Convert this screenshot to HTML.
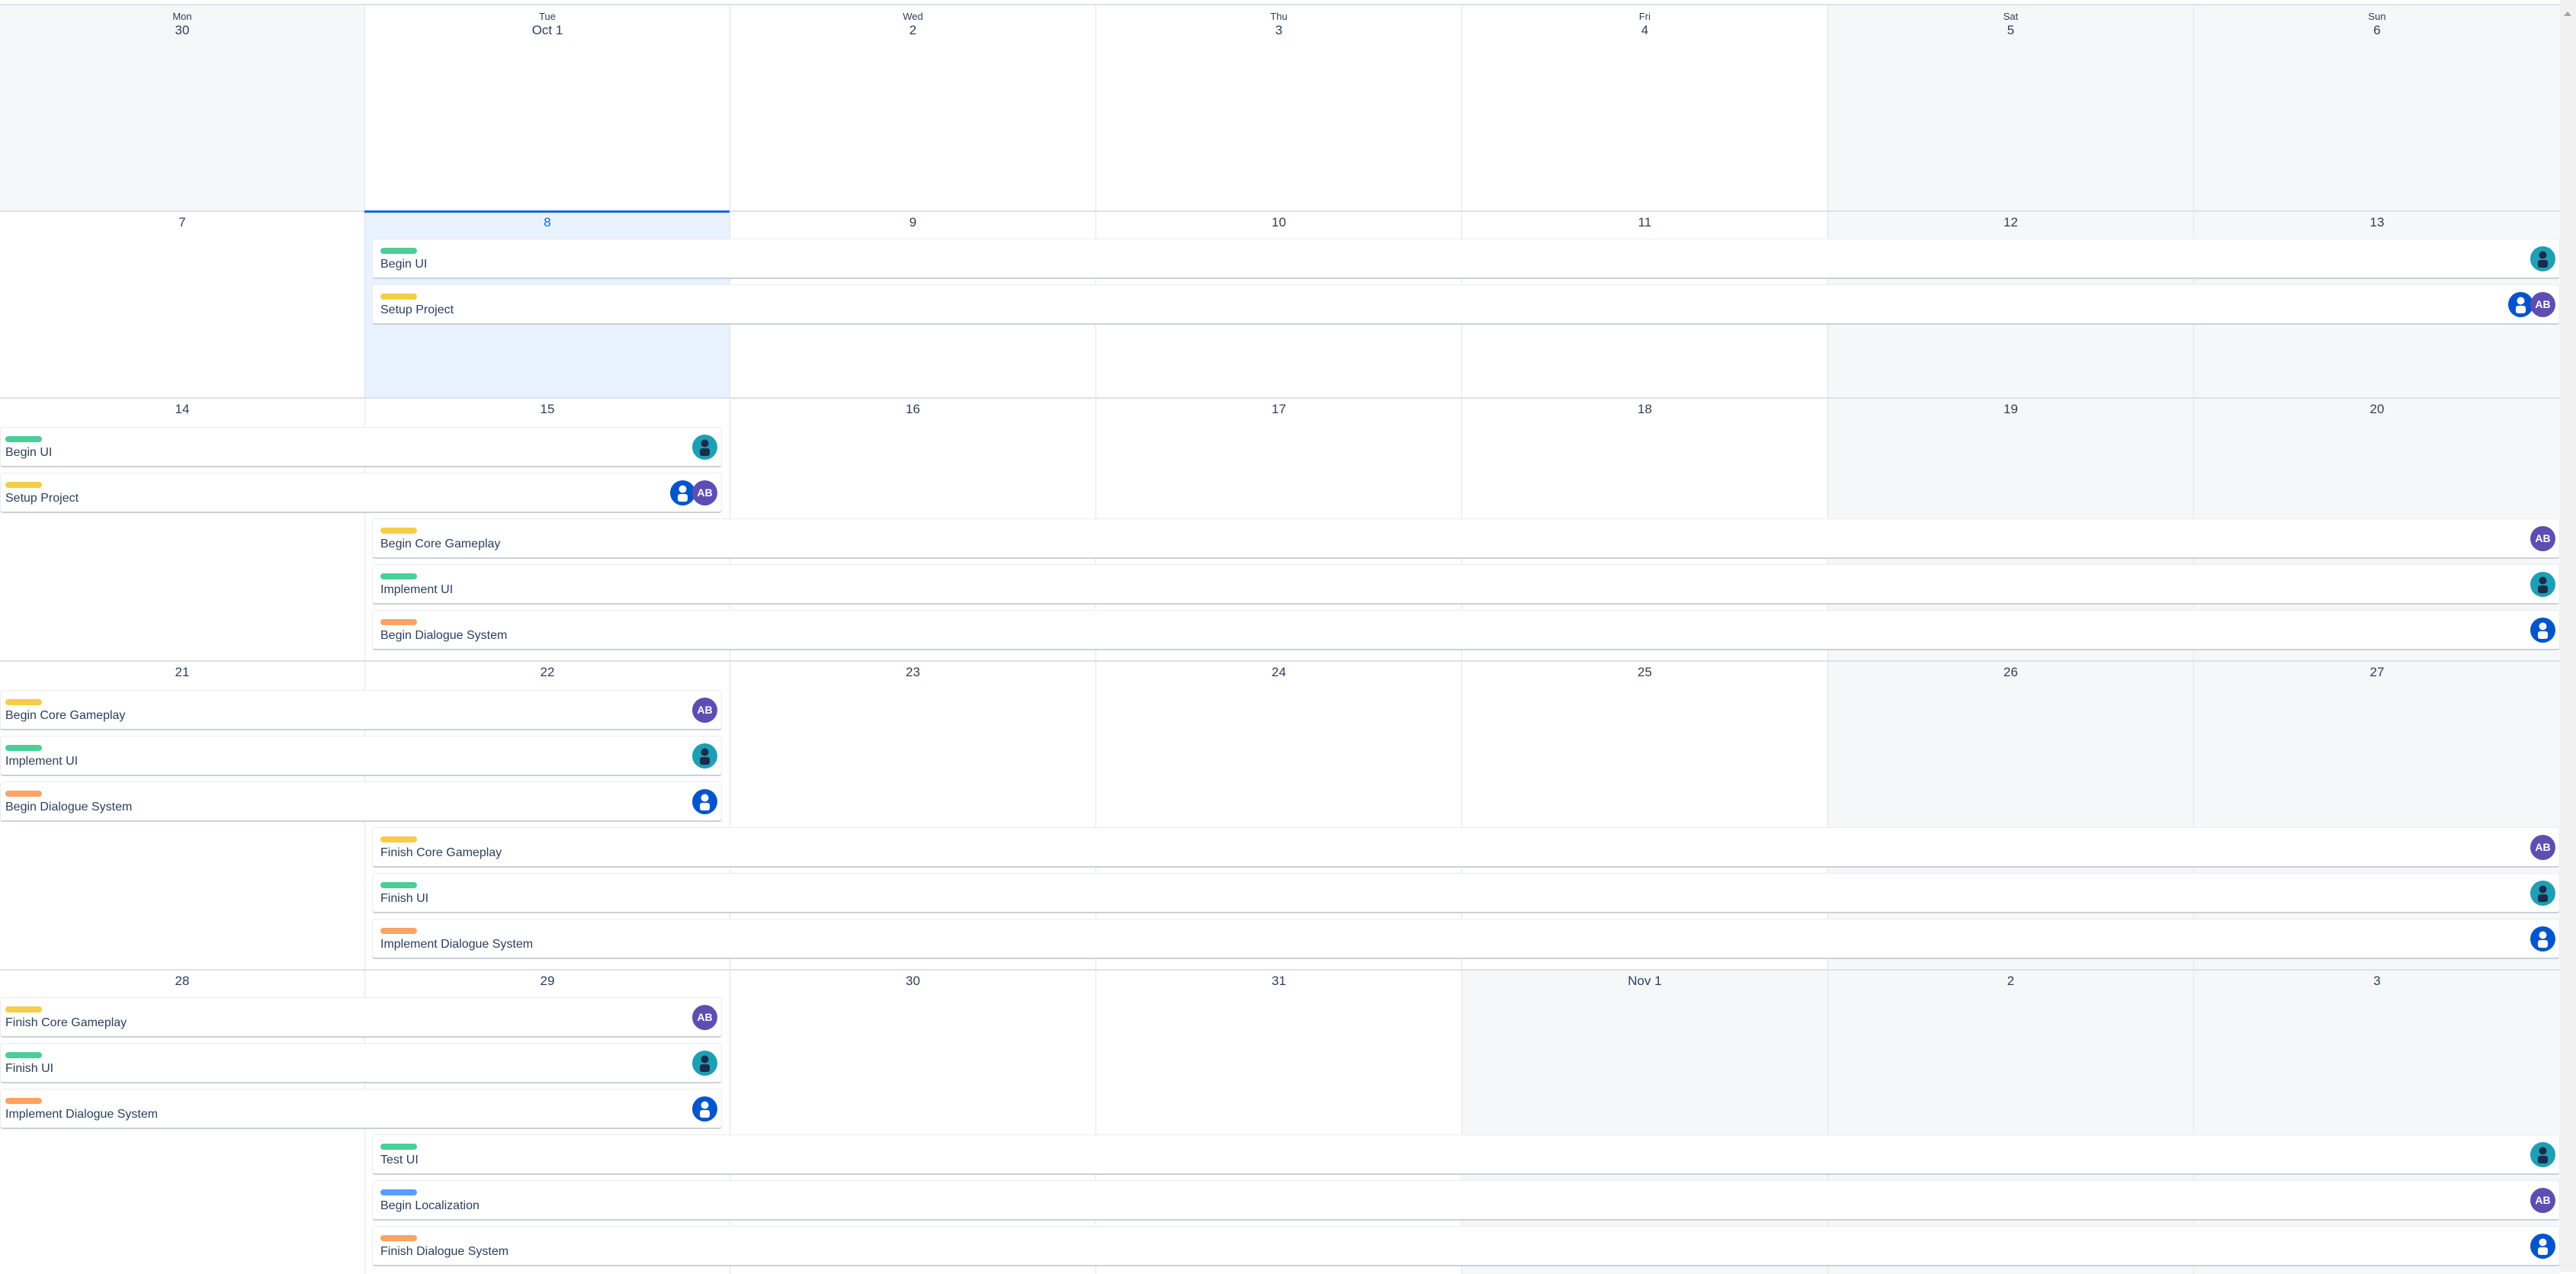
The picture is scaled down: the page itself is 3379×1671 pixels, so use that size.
<!DOCTYPE html>
<html><head><meta charset="utf-8">
<style>
*{margin:0;padding:0;box-sizing:border-box}
body{width:3379px;height:1668px;overflow:hidden;background:#fff;font-family:"Liberation Sans",sans-serif;position:relative}
.sb{position:absolute;left:3358px;top:0;width:21px;height:1668px;background:#f1f1f1}
.sb:after{content:"";position:absolute;left:5px;top:15px;border-left:5px solid transparent;border-right:5px solid transparent;border-bottom:6px solid #a3a3a3}
.wk{position:absolute;left:0;width:3358px;border-top:2px solid #dfe1e6}
.c{position:absolute;top:0;bottom:0;border-left:1px solid #e2e4e9}
.c0{left:0;width:478px;border-left:none}.c1{left:478px;width:479px}.c2{left:957px;width:480px}.c3{left:1437px;width:480px}.c4{left:1917px;width:480px}.c5{left:2397px;width:480px}.c6{left:2877px;width:481px}
.g{background:#f6f7f9}
.t{background:#e9f2ff}
.t:before{content:"";position:absolute;left:-1px;right:0;top:-2px;height:3px;background:#0c66e4}
.n{position:absolute;left:0;right:0;top:4px;text-align:center;font-size:17px;color:#2c3e5d;line-height:20px}
.t .n{color:#0c66e4}
.dw{position:absolute;left:0;right:0;top:7px;text-align:center;font-size:13px;color:#2c3e5d}
.dn{position:absolute;left:0;right:0;top:23px;text-align:center;font-size:17px;color:#2c3e5d}
.cd{position:absolute;height:53px;background:#fff;border:1px solid #ebecf0;border-bottom:2px solid #cdd0d8;border-radius:4px}
.bar{position:absolute;left:10px;top:11px;width:48px;height:8px;border-radius:4px}
.tx{position:absolute;left:10px;top:23px;font-size:16px;color:#2c3e5d;line-height:20px;white-space:nowrap}
.av{position:absolute;top:9px;width:33px;height:33px}
.gr{background:#4bce97}.ye{background:#f5cd47}.or{background:#fea362}.bl{background:#579dff}
.ab{border-radius:50%;background:#5e4db2;color:#fff;font-weight:bold;font-size:14px;line-height:33px;text-align:center}
</style></head><body>
<div class="sb"></div>
<div style="position:absolute;left:0;top:0;width:3358px;height:5px;background:#fff"></div>

<!-- week 1 -->
<div class="wk" style="top:5px;height:271px">
<div class="c c0 g"><div class="dw">Mon</div><div class="dn">30</div></div>
<div class="c c1"><div class="dw">Tue</div><div class="dn">Oct 1</div></div>
<div class="c c2"><div class="dw">Wed</div><div class="dn">2</div></div>
<div class="c c3"><div class="dw">Thu</div><div class="dn">3</div></div>
<div class="c c4"><div class="dw">Fri</div><div class="dn">4</div></div>
<div class="c c5 g"><div class="dw">Sat</div><div class="dn">5</div></div>
<div class="c c6 g"><div class="dw">Sun</div><div class="dn">6</div></div>
</div>

<!-- week 2 -->
<div class="wk" style="top:276px;height:245px">
<div class="c c0"><div class="n">7</div></div>
<div class="c c1 t"><div class="n">8</div></div>
<div class="c c2"><div class="n">9</div></div>
<div class="c c3"><div class="n">10</div></div>
<div class="c c4"><div class="n">11</div></div>
<div class="c c5 g"><div class="n">12</div></div>
<div class="c c6 g"><div class="n">13</div></div>
</div>

<!-- week 3 -->
<div class="wk" style="top:521px;height:345px">
<div class="c c0"><div class="n">14</div></div>
<div class="c c1"><div class="n">15</div></div>
<div class="c c2"><div class="n">16</div></div>
<div class="c c3"><div class="n">17</div></div>
<div class="c c4"><div class="n">18</div></div>
<div class="c c5 g"><div class="n">19</div></div>
<div class="c c6 g"><div class="n">20</div></div>
</div>

<!-- week 4 -->
<div class="wk" style="top:866px;height:405px">
<div class="c c0"><div class="n">21</div></div>
<div class="c c1"><div class="n">22</div></div>
<div class="c c2"><div class="n">23</div></div>
<div class="c c3"><div class="n">24</div></div>
<div class="c c4"><div class="n">25</div></div>
<div class="c c5 g"><div class="n">26</div></div>
<div class="c c6 g"><div class="n">27</div></div>
</div>

<!-- week 5 -->
<div class="wk" style="top:1271px;height:400px">
<div class="c c0"><div class="n">28</div></div>
<div class="c c1"><div class="n">29</div></div>
<div class="c c2"><div class="n">30</div></div>
<div class="c c3"><div class="n">31</div></div>
<div class="c c4 g"><div class="n">Nov 1</div></div>
<div class="c c5 g"><div class="n">2</div></div>
<div class="c c6 g"><div class="n">3</div></div>
</div>

<!-- week 2 cards -->
<div class="cd" style="left:488px;width:2870px;top:313px"><div class="bar gr"></div><div class="tx">Begin UI</div>
<svg class="av" style="right:5px" viewBox="0 0 33 33"><circle cx="16.5" cy="16.5" r="16.5" fill="#1d9fb5"/><circle cx="16.5" cy="11.5" r="5" fill="#1c2b4a"/><rect x="10" y="18" width="13" height="10" rx="3" fill="#1c2b4a"/></svg></div>
<div class="cd" style="left:488px;width:2870px;top:373px"><div class="bar ye"></div><div class="tx">Setup Project</div>
<svg class="av" style="right:34px" viewBox="0 0 33 33"><circle cx="16.5" cy="16.5" r="16.5" fill="#0055cc"/><circle cx="16.5" cy="11.5" r="5" fill="#fff"/><rect x="10" y="18" width="13" height="10" rx="3" fill="#fff"/></svg>
<div class="av ab" style="right:5px">AB</div></div>

<!-- week 3 cards -->
<div class="cd" style="left:0;width:947px;top:560px"><div class="bar gr" style="left:6px"></div><div class="tx" style="left:6px">Begin UI</div>
<svg class="av" style="right:5px" viewBox="0 0 33 33"><circle cx="16.5" cy="16.5" r="16.5" fill="#1d9fb5"/><circle cx="16.5" cy="11.5" r="5" fill="#1c2b4a"/><rect x="10" y="18" width="13" height="10" rx="3" fill="#1c2b4a"/></svg></div>
<div class="cd" style="left:0;width:947px;top:620px"><div class="bar ye" style="left:6px"></div><div class="tx" style="left:6px">Setup Project</div>
<svg class="av" style="right:34px" viewBox="0 0 33 33"><circle cx="16.5" cy="16.5" r="16.5" fill="#0055cc"/><circle cx="16.5" cy="11.5" r="5" fill="#fff"/><rect x="10" y="18" width="13" height="10" rx="3" fill="#fff"/></svg>
<div class="av ab" style="right:5px">AB</div></div>
<div class="cd" style="left:488px;width:2870px;top:680px"><div class="bar ye"></div><div class="tx">Begin Core Gameplay</div><div class="av ab" style="right:5px">AB</div></div>
<div class="cd" style="left:488px;width:2870px;top:740px"><div class="bar gr"></div><div class="tx">Implement UI</div>
<svg class="av" style="right:5px" viewBox="0 0 33 33"><circle cx="16.5" cy="16.5" r="16.5" fill="#1d9fb5"/><circle cx="16.5" cy="11.5" r="5" fill="#1c2b4a"/><rect x="10" y="18" width="13" height="10" rx="3" fill="#1c2b4a"/></svg></div>
<div class="cd" style="left:488px;width:2870px;top:800px"><div class="bar or"></div><div class="tx">Begin Dialogue System</div>
<svg class="av" style="right:5px" viewBox="0 0 33 33"><circle cx="16.5" cy="16.5" r="16.5" fill="#0055cc"/><circle cx="16.5" cy="11.5" r="5" fill="#fff"/><rect x="10" y="18" width="13" height="10" rx="3" fill="#fff"/></svg></div>

<!-- week 4 cards -->
<div class="cd" style="left:0;width:947px;top:905px"><div class="bar ye" style="left:6px"></div><div class="tx" style="left:6px">Begin Core Gameplay</div><div class="av ab" style="right:5px">AB</div></div>
<div class="cd" style="left:0;width:947px;top:965px"><div class="bar gr" style="left:6px"></div><div class="tx" style="left:6px">Implement UI</div>
<svg class="av" style="right:5px" viewBox="0 0 33 33"><circle cx="16.5" cy="16.5" r="16.5" fill="#1d9fb5"/><circle cx="16.5" cy="11.5" r="5" fill="#1c2b4a"/><rect x="10" y="18" width="13" height="10" rx="3" fill="#1c2b4a"/></svg></div>
<div class="cd" style="left:0;width:947px;top:1025px"><div class="bar or" style="left:6px"></div><div class="tx" style="left:6px">Begin Dialogue System</div>
<svg class="av" style="right:5px" viewBox="0 0 33 33"><circle cx="16.5" cy="16.5" r="16.5" fill="#0055cc"/><circle cx="16.5" cy="11.5" r="5" fill="#fff"/><rect x="10" y="18" width="13" height="10" rx="3" fill="#fff"/></svg></div>
<div class="cd" style="left:488px;width:2870px;top:1085px"><div class="bar ye"></div><div class="tx">Finish Core Gameplay</div><div class="av ab" style="right:5px">AB</div></div>
<div class="cd" style="left:488px;width:2870px;top:1145px"><div class="bar gr"></div><div class="tx">Finish UI</div>
<svg class="av" style="right:5px" viewBox="0 0 33 33"><circle cx="16.5" cy="16.5" r="16.5" fill="#1d9fb5"/><circle cx="16.5" cy="11.5" r="5" fill="#1c2b4a"/><rect x="10" y="18" width="13" height="10" rx="3" fill="#1c2b4a"/></svg></div>
<div class="cd" style="left:488px;width:2870px;top:1205px"><div class="bar or"></div><div class="tx">Implement Dialogue System</div>
<svg class="av" style="right:5px" viewBox="0 0 33 33"><circle cx="16.5" cy="16.5" r="16.5" fill="#0055cc"/><circle cx="16.5" cy="11.5" r="5" fill="#fff"/><rect x="10" y="18" width="13" height="10" rx="3" fill="#fff"/></svg></div>

<!-- week 5 cards -->
<div class="cd" style="left:0;width:947px;top:1308px"><div class="bar ye" style="left:6px"></div><div class="tx" style="left:6px">Finish Core Gameplay</div><div class="av ab" style="right:5px">AB</div></div>
<div class="cd" style="left:0;width:947px;top:1368px"><div class="bar gr" style="left:6px"></div><div class="tx" style="left:6px">Finish UI</div>
<svg class="av" style="right:5px" viewBox="0 0 33 33"><circle cx="16.5" cy="16.5" r="16.5" fill="#1d9fb5"/><circle cx="16.5" cy="11.5" r="5" fill="#1c2b4a"/><rect x="10" y="18" width="13" height="10" rx="3" fill="#1c2b4a"/></svg></div>
<div class="cd" style="left:0;width:947px;top:1428px"><div class="bar or" style="left:6px"></div><div class="tx" style="left:6px">Implement Dialogue System</div>
<svg class="av" style="right:5px" viewBox="0 0 33 33"><circle cx="16.5" cy="16.5" r="16.5" fill="#0055cc"/><circle cx="16.5" cy="11.5" r="5" fill="#fff"/><rect x="10" y="18" width="13" height="10" rx="3" fill="#fff"/></svg></div>
<div class="cd" style="left:488px;width:2870px;top:1488px"><div class="bar gr"></div><div class="tx">Test UI</div>
<svg class="av" style="right:5px" viewBox="0 0 33 33"><circle cx="16.5" cy="16.5" r="16.5" fill="#1d9fb5"/><circle cx="16.5" cy="11.5" r="5" fill="#1c2b4a"/><rect x="10" y="18" width="13" height="10" rx="3" fill="#1c2b4a"/></svg></div>
<div class="cd" style="left:488px;width:2870px;top:1548px"><div class="bar bl"></div><div class="tx">Begin Localization</div><div class="av ab" style="right:5px">AB</div></div>
<div class="cd" style="left:488px;width:2870px;top:1608px"><div class="bar or"></div><div class="tx">Finish Dialogue System</div>
<svg class="av" style="right:5px" viewBox="0 0 33 33"><circle cx="16.5" cy="16.5" r="16.5" fill="#0055cc"/><circle cx="16.5" cy="11.5" r="5" fill="#fff"/><rect x="10" y="18" width="13" height="10" rx="3" fill="#fff"/></svg></div>
</body></html>
